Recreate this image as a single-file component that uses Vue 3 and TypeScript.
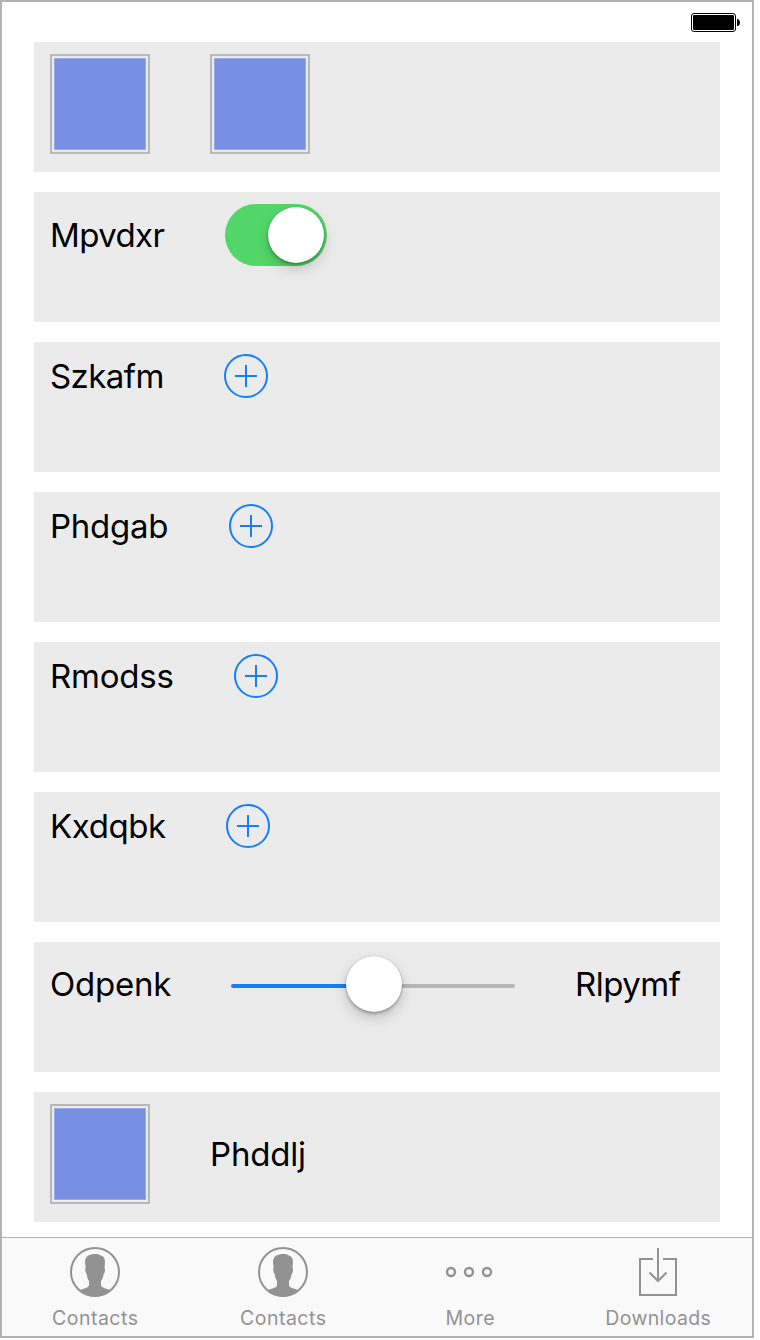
<script setup lang="ts">
interface Label {
  text: string
  width: number
  spacing: number
}

interface Row {
  kind: 'images' | 'toggle' | 'add' | 'range' | 'imageLabel'
  label?: Label
  trailing?: Label
}

const rows: Row[] = [
  { kind: 'images' },
  { kind: 'toggle', label: { text: 'Mpvdxr', width: 115, spacing: -0.6 } },
  { kind: 'add', label: { text: 'Szkafm', width: 114, spacing: -0.55 } },
  { kind: 'add', label: { text: 'Phdgab', width: 119, spacing: -0.25 } },
  { kind: 'add', label: { text: 'Rmodss', width: 124, spacing: -0.2 } },
  { kind: 'add', label: { text: 'Kxdqbk', width: 116, spacing: -0.4 } },
  {
    kind: 'range',
    label: { text: 'Odpenk', width: 121, spacing: -0.25 },
    trailing: { text: 'Rlpymf', width: 106, spacing: -0.5 },
  },
  { kind: 'imageLabel', label: { text: 'Phddlj', width: 96, spacing: -0.2 } },
]

const tabs = [
  { icon: 'contacts', text: 'Contacts' },
  { icon: 'contacts', text: 'Contacts' },
  { icon: 'more', text: 'More' },
  { icon: 'downloads', text: 'Downloads' },
]

const labelStyle = (l: Label) => ({ width: `${l.width}px`, letterSpacing: `${l.spacing}px` })
</script>

<template>
  <div class="phone">
    <header class="status">
      <svg width="50" height="20" viewBox="0 0 50 20">
        <rect x="0.5" y="0.5" width="44" height="18" rx="2.5" fill="#fff" stroke="#000" />
        <rect x="2" y="2" width="41" height="15" rx="1.2" fill="#000" />
        <path d="M46 6h1q2 1 2 3.500t-2 3.500h-1z" fill="#000" />
      </svg>
    </header>

    <main class="rows">
      <section v-for="(row, i) in rows" :key="i" class="row">
        <div class="line">
          <template v-if="row.kind === 'images'">
            <div class="swatch"></div>
            <div class="swatch"></div>
          </template>
          <div v-if="row.kind === 'imageLabel'" class="swatch"></div>
          <span v-if="row.label" class="label" :style="labelStyle(row.label)">{{ row.label.text }}</span>
          <div v-if="row.kind === 'toggle'" class="switch"><div class="thumb"></div></div>
          <svg v-if="row.kind === 'add'" class="plus" width="44" height="44" viewBox="0 0 44 44">
            <circle cx="22" cy="22" r="21" />
            <path d="M11 22H33M22 11V33" />
          </svg>
          <div v-if="row.kind === 'range'" class="slider">
            <div class="track done"></div>
            <div class="thumb"></div>
            <div class="track"></div>
          </div>
          <span v-if="row.trailing" class="label" :style="labelStyle(row.trailing)">{{ row.trailing.text }}</span>
        </div>
      </section>
    </main>

    <nav class="tabs">
      <div v-for="(tab, i) in tabs" :key="i" class="tab" :class="tab.icon">
        <svg v-if="tab.icon === 'contacts'" width="50" height="50" viewBox="0 0 50 50">
          <circle cx="25" cy="25" r="24" fill="none" stroke="#929292" stroke-width="2" />
          <path
            d="M9.500 43.500C12 41.500 18 41.500 19 38.500V34C17.500 32 17 29.500 16.700 27C15.500 26 15 23 15.300 21.500L15.700 20.500L15 15C15 9 19.500 7 25.500 7C28 7 29.500 7.500 30.500 8.500C34 9 35 12 35 15L34.500 20.500C35.500 22 35 25.500 33.700 27C33.200 30 32.500 32 31 34V38.500C32 41.500 38 41.500 40.500 43.500C36 48 30 49.500 25 49.500S14 48 9.500 43.500Z"
            fill="#929292"
          />
        </svg>
        <svg v-else-if="tab.icon === 'more'" width="50" height="50" viewBox="0 0 50 50" fill="none" stroke="#929292" stroke-width="2.4">
          <circle cx="6" cy="25" r="4" />
          <circle cx="24" cy="25" r="4" />
          <circle cx="42" cy="25" r="4" />
        </svg>
        <svg v-else width="50" height="50" viewBox="0 0 50 50" fill="none" stroke="#929292" stroke-width="2">
          <path d="M20 12H7V48H43V12H30M25 1V34M16.500 25.500L25 34L33.500 25.500" />
        </svg>
        <span class="caption">{{ tab.text }}</span>
      </div>
    </nav>
  </div>
</template>

<style scoped>
.phone {
  box-sizing: border-box;
  width: 754px;
  height: 1338px;
  border: 2px solid #b2b2b2;
  background: #fff;
  display: flex;
  flex-direction: column;
  font-family: Inter, "Liberation Sans", sans-serif;
}
.status {
  height: 40px;
  flex: none;
  box-sizing: border-box;
  padding: 11px 11px 0 0;
  display: flex;
  justify-content: flex-end;
}
.rows {
  flex: 1;
  padding: 0 32px;
  display: flex;
  flex-direction: column;
  gap: 20px;
}
.row {
  box-sizing: border-box;
  height: 130px;
  padding: 12px 16px;
  background: #ebebeb;
}
.line {
  display: flex;
  align-items: center;
  gap: 60px;
}
.swatch {
  box-sizing: border-box;
  width: 100px;
  height: 100px;
  border: 2px solid #b9b9b9;
  padding: 2px;
  background: #7790e3 content-box;
  box-shadow: inset 0 0 0 1px #e6e6e8, inset 0 0 0 2px #f0f2fb, inset 0 0 0 3px #95a8e9;
}
.label {
  flex: none;
  font-size: 33px;
  line-height: 40px;
  white-space: nowrap;
  color: #000;
}
.switch {
  box-sizing: border-box;
  width: 102px;
  height: 62px;
  padding: 3px;
  border-radius: 31px;
  background: #53d769;
  display: flex;
  justify-content: flex-end;
}
.thumb {
  flex: none;
  width: 56px;
  height: 56px;
  border-radius: 50%;
  background: #fff;
  box-shadow: 0 0 1px rgba(0, 0, 0, 0.3), 0 2px 3px rgba(0, 0, 0, 0.25), 0 6px 14px rgba(0, 0, 0, 0.18);
}
.plus {
  fill: none;
  stroke: #157efb;
  stroke-width: 2;
}
.slider {
  flex: none;
  width: 284px;
  height: 60px;
  display: flex;
  align-items: center;
}
.track {
  flex: 1;
  height: 4px;
  margin: 4px 0 0 -1px;
  border-radius: 0 2px 2px 0;
  background: #b5b6b6;
}
.track.done {
  margin: 4px -1px 0 0;
  border-radius: 2px 0 0 2px;
  background: #157efb;
}
.slider .thumb {
  position: relative;
  margin-left: 1px;
}
.tabs {
  box-sizing: border-box;
  height: 99px;
  flex: none;
  border-top: 1px solid #b2b2b2;
  background: #f9f9f9;
  display: grid;
  grid-template-columns: 186px 190px 184px 190px;
}
.tab {
  padding-top: 9px;
  display: flex;
  flex-direction: column;
  align-items: center;
}
.tab.downloads {
  padding-left: 2px;
}
.tab svg {
  flex: none;
}
.caption {
  margin-top: 9px;
  padding-left: 0.5px;
  font-size: 19.5px;
  line-height: 24px;
  letter-spacing: 0.5px;
  color: #929292;
}
.downloads .caption {
  letter-spacing: 0.35px;
}
</style>

<style>
body {
  background: #fff;
}
</style>
